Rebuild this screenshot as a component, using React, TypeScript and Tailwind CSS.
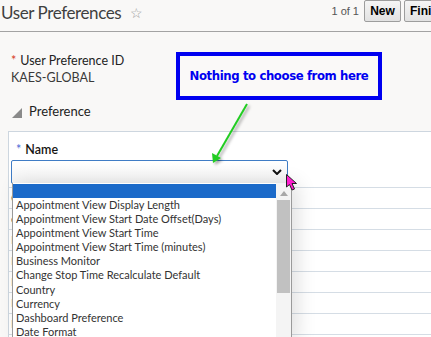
import React from "react";

const items = [
  "Appointment View Display Length",
  "Appointment View Start Date Offset(Days)",
  "Appointment View Start Time",
  "Appointment View Start Time (minutes)",
  "Business Monitor",
  "Change Stop Time Recalculate Default",
  "Country",
  "Currency",
  "Dashboard Preference",
  "Date Format",
];

const bgRows = ["C", "c", "D", "D", "D", "D", "D", "D"];

export default function App() {
  return (
    <div className="relative w-[431px] h-[337px] overflow-hidden bg-[#f9f8f7] text-[#333] font-['Lato',sans-serif]">
      {/* Header */}
      <div className="h-[32px] border-b border-[#a3a3a3] flex items-start justify-between">
        <div className="flex items-center h-[26px]">
          <span className="text-[17px] leading-[24px] text-[#3f3f3f] ml-[1px] tracking-[-0.4px]">User Preferences</span>
          <span className="ml-[9px] text-[14px] leading-[14px] text-[#9a9a9a]">☆</span>
        </div>
        <div className="flex items-center gap-[3px] h-[22px]">
          <span className="text-[11px] leading-[12px] text-[#555] mr-[2px] font-['Liberation_Sans',sans-serif]">1 of 1</span>
          <button className="h-[22px] w-[37px] rounded-[2px] border border-[#9d9d9d] bg-gradient-to-b from-[#f5f5f5] to-[#e2e2e2] text-[12px] font-bold text-black font-['Liberation_Sans',sans-serif]">
            New
          </button>
          <button className="h-[22px] w-[50px] rounded-[2px] border border-[#9d9d9d] bg-gradient-to-b from-[#f5f5f5] to-[#e2e2e2] text-[12px] font-bold text-black text-left pl-[5px] font-['Liberation_Sans',sans-serif] mr-[-23px]">
            Finish
          </button>
        </div>
      </div>

      {/* Field */}
      <div className="pt-[21px] pl-[11px]">
        <div className="text-[12.5px] leading-[16px] text-[#222]">
          <span className="text-[#d63b25] mr-[4px]">*</span>User Preference ID
        </div>
        <div className="text-[12.5px] leading-[16px] mt-[1px] text-[#3a3a3a]">KAES-GLOBAL</div>
      </div>

      {/* Section */}
      <div className="flex items-center pl-[12px] mt-[17px] h-[16px]">
        <svg width="10" height="10" viewBox="0 0 10 10" className="mt-[4px]">
          <polygon points="10,0 10,10 0,10" fill="#8a8a8a" />
        </svg>
        <span className="ml-[7px] text-[13px] leading-[16px] text-[#222]">Preference</span>
      </div>

      {/* Panel */}
      <div className="ml-[8px] mt-[12px] border-t border-l border-[#cdd6df] bg-white h-[220px]">
        <div className="pt-[10px] pl-[7px] text-[12.5px] leading-[16px] text-[#161513] font-semibold">
          <span className="text-[#4d6bd6] mr-[4px] font-normal">*</span>Name
        </div>
        <div className="ml-[2px] mt-[2px] w-[277px] h-[24px] rounded-[2px] border border-[#3f7cc5] bg-gradient-to-b from-white to-[#f3f3f3] flex items-center justify-end pr-[5px]">
          <svg width="10" height="6" viewBox="0 0 10 6">
            <polyline points="1,1 5,5 9,1" fill="none" stroke="#111" strokeWidth="2" />
          </svg>
        </div>
        <div className="mt-[3px]">
          {bgRows.map((r, i) => (
            <div key={i} className="h-[21px] border-t border-[#d5dde5] flex items-center pl-[2px] text-[12px] text-[#555]">
              {r}
            </div>
          ))}
        </div>
      </div>

      {/* Dropdown list */}
      <div className="absolute left-[12px] top-[183px] w-[280px] h-[160px] bg-white border-l border-r border-[#9a9a9a] flex shadow-[6px_0_18px_rgba(0,0,0,0.12)]">
        <div className="flex-1 pt-[1px]">
          <div className="h-[13.5px] bg-[#1b6ac9]" />
          {items.map((t) => (
            <div key={t} className="h-[14.2px] leading-[14px] pl-[3px] text-[11px] text-[#333] whitespace-nowrap overflow-hidden">
              {t}
            </div>
          ))}
        </div>
        <div className="w-[15px] bg-[#f4f4f4] flex flex-col items-center">
          <svg width="8" height="5" viewBox="0 0 8 5" className="mt-[8px]">
            <polygon points="4,0 8,5 0,5" fill="#a8a8a8" />
          </svg>
          <div className="mt-[4px] w-[13px] h-[93px] bg-[#c1c1c1]" />
        </div>
      </div>

      {/* Callout */}
      <div className="absolute left-[176px] top-[52px] w-[206px] h-[48px] border-4 border-[#0000f0] bg-[#faf9f8] flex items-center justify-center">
        <span className="text-[13px] font-bold text-[#0000f0] font-['DejaVu_Sans_Condensed','DejaVu_Sans',sans-serif] tracking-[-0.4px]">
          Nothing to choose from here
        </span>
      </div>

      {/* Green arrow */}
      <svg className="absolute left-0 top-0 pointer-events-none" width="431" height="337">
        <defs>
          <filter id="sh" x="-50%" y="-50%" width="200%" height="200%">
            <feDropShadow dx="2" dy="2" stdDeviation="1.5" floodColor="#000" floodOpacity="0.35" />
          </filter>
        </defs>
        <g filter="url(#sh)">
          <line x1="247" y1="104" x2="217" y2="156" stroke="#22cc22" strokeWidth="2" />
          <polygon points="213,163 212,153 221,158" fill="#22cc22" />
        </g>
      </svg>

      {/* Cursor */}
      <svg className="absolute left-[286px] top-[174px]" width="14" height="18" viewBox="0 0 14 18">
        <polygon points="0.5,0.5 0.5,13 3.5,10.5 6,16 8.5,15 6,9.5 10.5,9.5" fill="#ff1ecf" stroke="#222" strokeWidth="1" />
      </svg>
    </div>
  );
}
